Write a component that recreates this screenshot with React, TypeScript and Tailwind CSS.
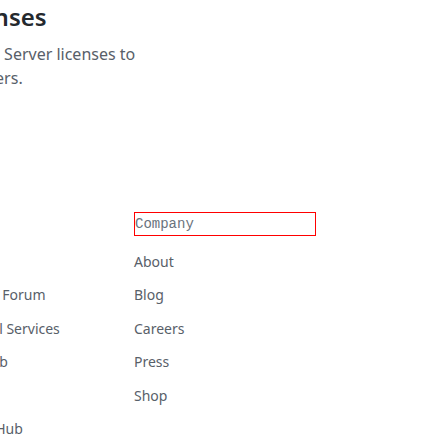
const supportLinks = [
  "Docs",
  "Community Forum",
  "Professional Services",
  "Learning Lab",
  "Status",
  "Contact GitHub",
];

const companyLinks = ["About", "Blog", "Careers", "Press", "Shop"];

function App() {
  return (
    <div
      className="w-[448px] h-[448px] overflow-hidden bg-white"
      style={{ fontFamily: '"Noto Sans", "Liberation Sans", sans-serif' }}
    >
      <div className="-ml-[300px] w-[800px]">
        {/* page intro */}
        <section className="pl-[38px] pt-[2px]">
          <h1 className="text-[24px] leading-[30px] font-semibold text-[#24292e]">
            GitHub Enterprise licenses
          </h1>
          <p className="mt-[10px] ml-[3px] text-[16px] leading-[24px] text-[#586069]">
            <span className="block whitespace-nowrap">
              Buy and manage{" "}
              <a href="#" className="text-[#0366d6]">
                Enterprise Install
              </a>{" "}
              Server licenses to
            </span>
            <span className="block whitespace-nowrap">
              give access to each of your members.
            </span>
          </p>
        </section>

        {/* footer columns */}
        <footer className="mt-[122px] flex pl-[222px]">
          <div className="w-[212px]">
            <h2 className="h-[24px] text-[14px] leading-[22px] text-[#586069]">
              Support
            </h2>
            <ul className="mt-[14.5px] flex flex-col gap-[12.5px] text-[14px] leading-[21px]">
              {supportLinks.map((link) => (
                <li key={link}>
                  <a href="#" className="text-[#586069]">
                    {link}
                  </a>
                </li>
              ))}
            </ul>
          </div>

          <div className="w-[182px]">
            <h2 className="h-[24px] border border-[#ff0000] font-['Liberation_Mono',monospace] text-[14px] leading-[22px] text-[#6a737d]">
              Company
            </h2>
            <ul className="mt-[14.5px] flex flex-col gap-[12.5px] text-[14px] leading-[21px]">
              {companyLinks.map((link) => (
                <li key={link}>
                  <a href="#" className="text-[#586069]">
                    {link}
                  </a>
                </li>
              ))}
            </ul>
          </div>
        </footer>
      </div>
    </div>
  );
}

export default App;
